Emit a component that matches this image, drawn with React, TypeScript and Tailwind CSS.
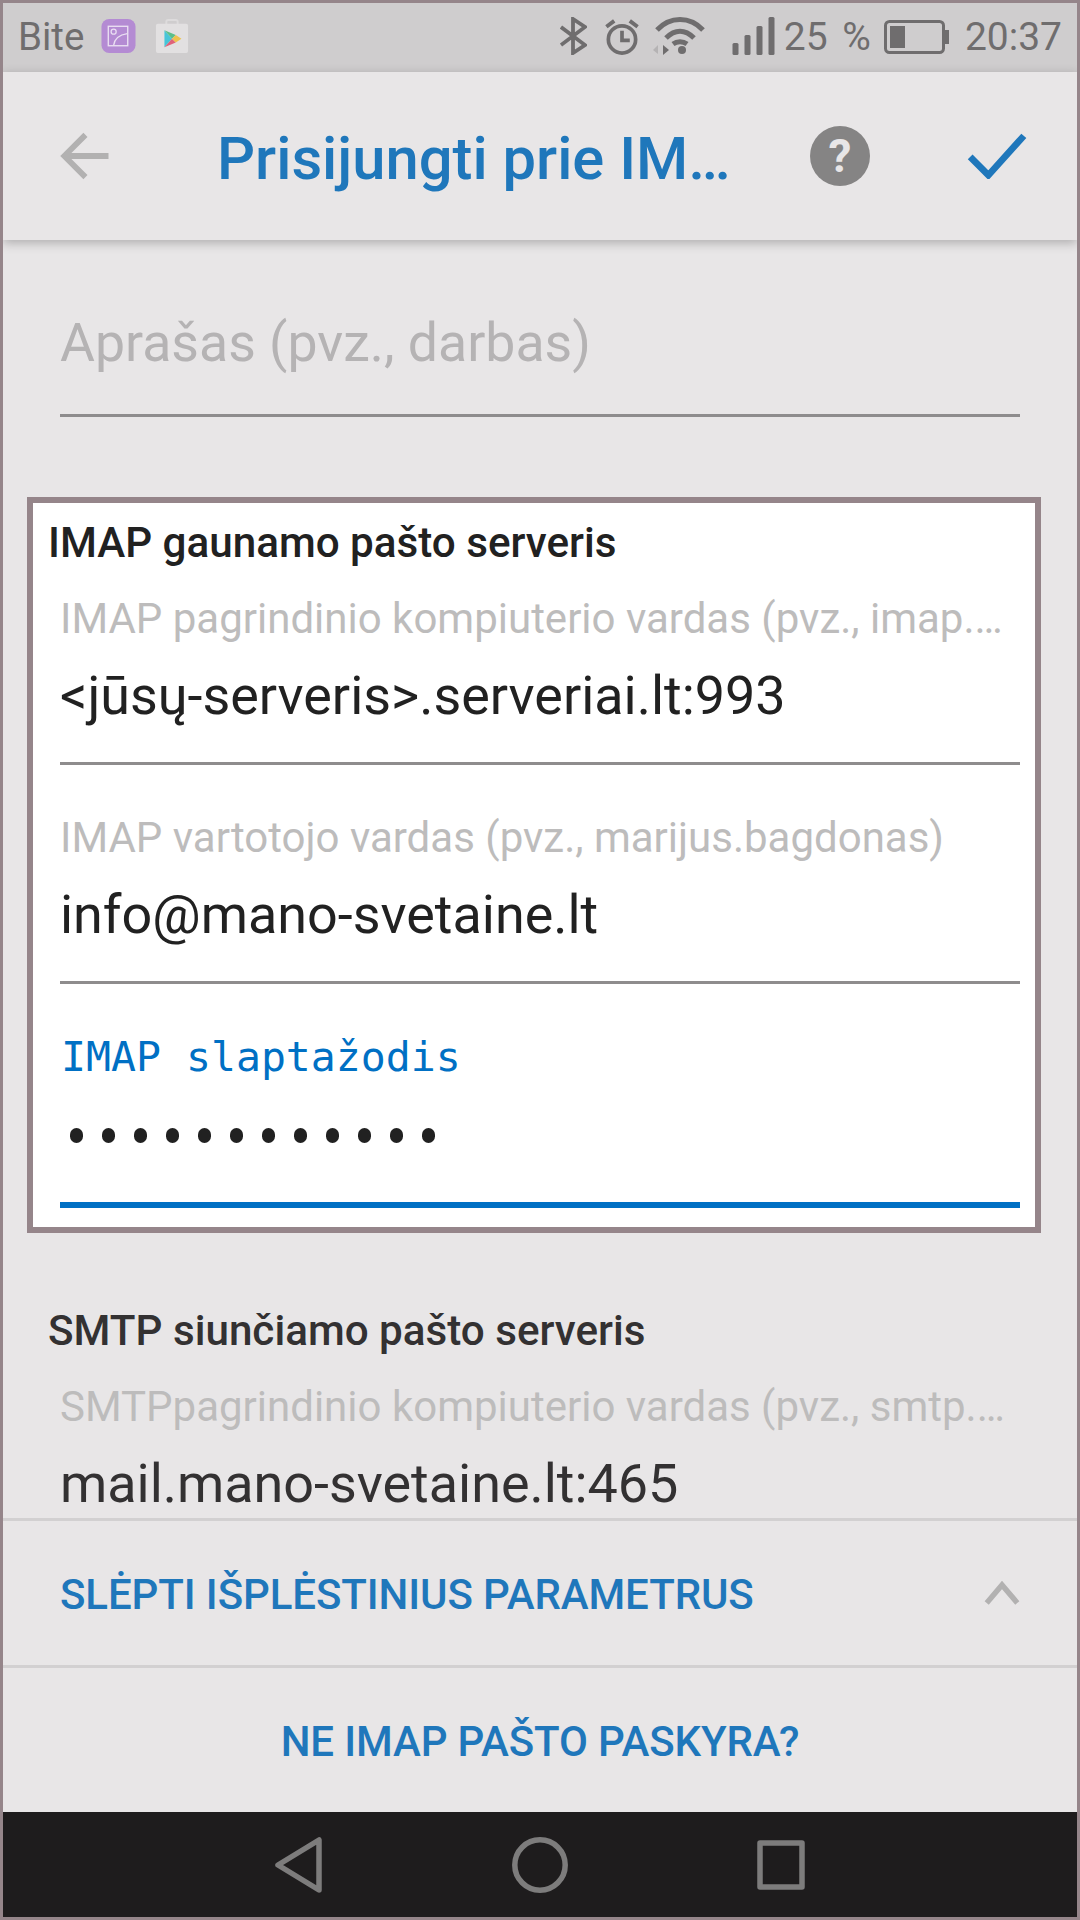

const roboto = { fontFamily: "Roboto, sans-serif" };

function Field({ label, value, dark = false }: { label: string; value: string; dark?: boolean }) {
  return (
    <div className="flex flex-col">
      <div className="text-[42px] leading-[48px] text-[#bdbcbc] whitespace-nowrap overflow-hidden">{label}</div>
      <div className={`mt-[22px] text-[53.9px] leading-[62px] whitespace-nowrap ${dark ? "text-[#333132]" : "text-[#212121]"}`}>{value}</div>
      <div className="mt-[35px] h-[3px] bg-[#8e8c8d]" />
    </div>
  );
}

function StatusBar() {
  return (
    <div className="h-[69px] shrink-0 bg-[#cfcdce] flex items-center text-[#6f6d6e] text-[39px]">
      <span className="ml-[15px] text-[38.5px] leading-none">Bite</span>
      <svg className="ml-[17px] mb-[3px]" width="35" height="35" viewBox="0 0 36 36">
        <rect width="35" height="35" x="0.5" rx="8" fill="#b48bd3" />
        <rect x="7.5" y="7.5" width="20" height="20" fill="none" stroke="#eadff2" strokeWidth="1.4" />
        <circle cx="13" cy="13" r="2.6" fill="none" stroke="#eadff2" strokeWidth="1.3" />
        <path d="M13 27 C14 20 20 16 27 15" fill="none" stroke="#eadff2" strokeWidth="1.4" />
      </svg>
      <svg className="ml-[19px] mb-[3px]" width="34" height="34" viewBox="0 0 36 36">
        <rect x="12" y="1" width="12" height="8" rx="2" fill="none" stroke="#dddbdc" strokeWidth="2" />
        <rect x="1" y="5" width="34" height="31" rx="2" fill="#e2e0e1" />
        <path d="M10 12 L18 21 L10 30 Z" fill="#47c5d8" />
        <path d="M10 12 L18 21 L22 17 Z" fill="#5bbf8a" />
        <path d="M10 30 L18 21 L22 25 Z" fill="#e0627a" />
        <path d="M22 17 L28 21 L22 25 L18 21 Z" fill="#eec24f" />
      </svg>
      <div className="flex-1" />
      <svg className="mb-[3px]" width="27" height="38" viewBox="0 0 27 38" fill="none" stroke="#6f6d6e" strokeWidth="3.8">
        <path d="M1 10 L25 28 L13 36 V2 L25 10 L1 28" />
      </svg>
      <svg className="ml-[17px] mb-[3px]" width="36" height="37" viewBox="0 0 36 38" fill="none" stroke="#6f6d6e" strokeWidth="3.8">
        <circle cx="18" cy="22" r="14" />
        <path d="M18 13 V23 H26" />
        <path d="M2 9 L10 3 M34 9 L26 3" strokeWidth="4" />
      </svg>
      <svg className="ml-[13px] mb-[3px]" width="54" height="38" viewBox="0 0 54 38" fill="none" stroke="#6f6d6e" strokeWidth="5">
        <path d="M4 13 C17 -1 37 -1 50 13" />
        <path d="M13 21 C22 12 32 12 41 21" />
        <path d="M20 27 C24 24 30 24 34 27" />
        <circle cx="29" cy="33" r="4" fill="#6f6d6e" stroke="none" />
        <path d="M0 33 L5 28 V37 Z" fill="#b5b3b4" stroke="none" />
        <path d="M10 28 L16 33 L10 38 Z" fill="#6f6d6e" stroke="none" />
      </svg>
      <svg className="ml-[25px] mb-[3px]" width="43" height="38" viewBox="0 0 42 38" fill="#6f6d6e">
        <rect x="0" y="26" width="6" height="12" rx="1.5" />
        <rect x="12" y="18" width="6" height="20" rx="1.5" />
        <rect x="24" y="9" width="6" height="29" rx="1.5" />
        <rect x="36" y="0" width="6" height="38" rx="1.5" />
      </svg>
      <span className="ml-[9px] leading-none [word-spacing:5px]">25 %</span>
      <svg className="ml-[13px] mb-[2px]" width="66" height="34" viewBox="0 0 66 34">
        <rect x="1.5" y="1.5" width="58" height="31" rx="4" fill="none" stroke="#6f6d6e" strokeWidth="3" />
        <rect x="6" y="6" width="15" height="22" fill="#6f6d6e" />
        <rect x="61" y="10" width="4" height="14" fill="#6f6d6e" />
      </svg>
      <span className="ml-[15px] mr-[15px] leading-none">20:37</span>
    </div>
  );
}

function AppBar() {
  return (
    <div className="relative z-10 h-[168px] shrink-0 bg-[#e8e6e7] flex items-center shadow-[0_3px_10px_rgba(0,0,0,0.25)]">
      <svg className="ml-[57px]" width="49" height="48" viewBox="0 0 50 50" fill="none" stroke="#b2b1b1" strokeWidth="6">
        <path d="M50 25 H5 M26 3 L4 25 L26 47" />
      </svg>
      <span className="ml-[108px] w-[530px] pt-[7px] text-[#1f77bb] text-[59.7px] font-medium leading-none whitespace-nowrap">Prisijungti prie IM…</span>
      <div className="ml-[63px] w-[60px] h-[60px] rounded-full bg-[#858484] flex items-center justify-center text-[#e8e6e7] text-[46px] font-bold leading-none">?</div>
      <svg className="ml-[97px]" width="60" height="46" viewBox="0 0 60 48" fill="none" stroke="#1f77bb" strokeWidth="7">
        <path d="M2 25 L21 44 L58 3" />
      </svg>
    </div>
  );
}

export default function App() {
  return (
    <div style={roboto} className="w-[1080px] h-[1920px] overflow-hidden flex flex-col border-[3px] border-[#95858a] bg-[#e8e6e7]">
      <StatusBar />
      <AppBar />
      <div className="flex-1 min-h-0 overflow-hidden flex flex-col">
        <div className="mt-[72px] mx-[57px] flex flex-col shrink-0">
          <div className="text-[53.6px] leading-[62px] text-[#b5b3b4]">Aprašas (pvz., darbas)</div>
          <div className="mt-[40px] h-[3px] bg-[#8e8c8d]" />
        </div>
        <div className="shrink-0 mt-[80px] ml-[24px] mr-[36px] border-[6px] border-[#95858a] bg-white pt-[17px] pb-[19px]">
          <div className="ml-[15px] text-[42.2px] leading-[46px] font-medium text-[#212121]">IMAP gaunamo pašto serveris</div>
          <div className="ml-[27px] mr-[15px] mt-[29px] flex flex-col gap-[49px]">
            <Field label="IMAP pagrindinio kompiuterio vardas (pvz., imap.…" value="<jūsų-serveris>.serveriai.lt:993" />
            <Field label="IMAP vartotojo vardas (pvz., marijus.bagdonas)" value="info@mano-svetaine.lt" />
            <div className="flex flex-col">
              <div style={{ fontFamily: "'DejaVu Sans Mono', monospace" }} className="ml-[1px] text-[41.5px] leading-[48px] text-[#0070c4]">IMAP slaptažodis</div>
              <div className="mt-[34px] h-[40px] flex items-center gap-[19px] ml-[10px]">
                {Array.from({ length: 12 }).map((_, i) => (
                  <span key={i} className="w-[13px] h-[15px] rounded-full bg-[#212121]" />
                ))}
              </div>
              <div className="mt-[47px] h-[6px] bg-[#0070c4]" />
            </div>
          </div>
        </div>
        <div className="shrink-0 mt-[75px] ml-[45px] text-[42.2px] leading-[46px] font-medium text-[#333132]">SMTP siunčiamo pašto serveris</div>
        <div className="shrink-0 mx-[57px] mt-[29px]">
          <Field label="SMTPpagrindinio kompiuterio vardas (pvz., smtp.…" value="mail.mano-svetaine.lt:465" dark />
        </div>
      </div>
      <div className="h-[147px] shrink-0 border-t-[3px] border-[#d2d0d1] flex items-center justify-between pl-[57px] pr-[57px]">
        <span className="pt-[3px] text-[42px] font-medium tracking-[-0.1px] text-[#1f77bb] leading-none whitespace-nowrap">SLĖPTI IŠPLĖSTINIUS PARAMETRUS</span>
        <svg width="36" height="24" viewBox="0 0 40 26" fill="none" stroke="#b2b1b1" strokeWidth="6">
          <path d="M3 24 L20 4 L37 24" />
        </svg>
      </div>
      <div className="h-[147px] shrink-0 border-t-[3px] border-[#d2d0d1] flex items-center justify-center">
        <span className="pt-[3px] text-[42px] font-medium tracking-[-0.15px] text-[#1f77bb] leading-none whitespace-nowrap">NE IMAP PAŠTO PASKYRA?</span>
      </div>
      <div className="h-[105px] shrink-0 bg-[#1e1c1d] flex items-center justify-center gap-[189px]">
        <svg width="48" height="56" viewBox="0 0 48 56" fill="none" stroke="#7d7c7c" strokeWidth="5.5" strokeLinejoin="round">
          <path d="M44 3 V53 L3 28 Z" />
        </svg>
        <svg width="56" height="56" viewBox="0 0 56 56" fill="none" stroke="#7d7c7c" strokeWidth="5.5">
          <circle cx="28" cy="28" r="25.2" />
        </svg>
        <svg width="48" height="50" viewBox="0 0 48 50" fill="none" stroke="#7d7c7c" strokeWidth="5.5" strokeLinejoin="round">
          <rect x="3" y="3" width="42" height="44" />
        </svg>
      </div>
    </div>
  );
}
